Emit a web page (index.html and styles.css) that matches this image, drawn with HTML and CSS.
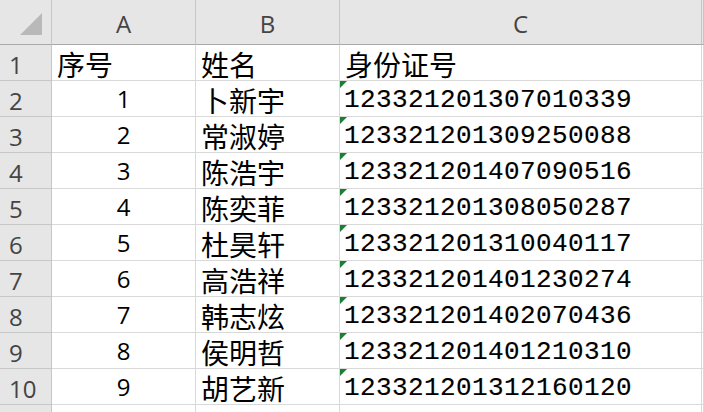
FILE: index.html
```html
<!DOCTYPE html>
<html lang="zh">
<head>
<meta charset="utf-8">
<link rel="stylesheet" href="styles.css">
</head>
<body>
<div class="sheet">
  <div class="hd corner"><span class="tri"></span></div>
  <div class="hd col">A</div>
  <div class="hd col">B</div>
  <div class="hd col">C</div>
  <div class="hd col"></div>

  <div class="hd row">1</div>
  <div class="cell zh">序号</div>
  <div class="cell zh">姓名</div>
  <div class="cell zh">身份证号</div>
  <div class="cell"></div>

  <div class="hd row">2</div>
  <div class="cell num">1</div>
  <div class="cell zh">卜新宇</div>
  <div class="cell id">123321201307010339</div>
  <div class="cell"></div>

  <div class="hd row">3</div>
  <div class="cell num">2</div>
  <div class="cell zh">常淑婷</div>
  <div class="cell id">123321201309250088</div>
  <div class="cell"></div>

  <div class="hd row">4</div>
  <div class="cell num">3</div>
  <div class="cell zh">陈浩宇</div>
  <div class="cell id">123321201407090516</div>
  <div class="cell"></div>

  <div class="hd row">5</div>
  <div class="cell num">4</div>
  <div class="cell zh">陈奕菲</div>
  <div class="cell id">123321201308050287</div>
  <div class="cell"></div>

  <div class="hd row">6</div>
  <div class="cell num">5</div>
  <div class="cell zh">杜昊轩</div>
  <div class="cell id">123321201310040117</div>
  <div class="cell"></div>

  <div class="hd row">7</div>
  <div class="cell num">6</div>
  <div class="cell zh">高浩祥</div>
  <div class="cell id">123321201401230274</div>
  <div class="cell"></div>

  <div class="hd row">8</div>
  <div class="cell num">7</div>
  <div class="cell zh">韩志炫</div>
  <div class="cell id">123321201402070436</div>
  <div class="cell"></div>

  <div class="hd row">9</div>
  <div class="cell num">8</div>
  <div class="cell zh">侯明哲</div>
  <div class="cell id">123321201401210310</div>
  <div class="cell"></div>

  <div class="hd row">10</div>
  <div class="cell num">9</div>
  <div class="cell zh">胡艺新</div>
  <div class="cell id">123321201312160120</div>
  <div class="cell"></div>

  <div class="hd row last"></div>
  <div class="cell last"></div>
  <div class="cell last"></div>
  <div class="cell last"></div>
  <div class="cell last"></div>
</div>
</body>
</html>
```
FILE: styles.css
```css
* { box-sizing: border-box; }
html, body { margin: 0; padding: 0; background: #fff; overflow: hidden; }
body { width: 704px; height: 412px; }

.sheet {
  display: grid;
  grid-template-columns: 52px 144px 144px 362px 1fr;
  grid-template-rows: 45px repeat(10, 36px) 7px;
  width: 704px;
  height: 412px;
}

.hd {
  background: #e6e6e6;
  color: #444;
  font-family: "Open Sans", "Liberation Sans", sans-serif;
  font-size: 24px;
  border-right: 1px solid #c6c6c6;
  border-bottom: 1px solid #c6c6c6;
  display: flex;
  align-items: center;
  justify-content: center;
}
.hd.col { border-bottom-color: #a8a8a8; padding-top: 2px; }
.hd.corner { position: relative; border-bottom-color: #a8a8a8; }
.hd.row { justify-content: flex-start; padding-left: 9px; padding-top: 4px; }
.hd.last, .cell.last { border-bottom: none; }

.tri {
  position: absolute;
  left: 20px;
  top: 13px;
  width: 0;
  height: 0;
  border-left: 22px solid transparent;
  border-bottom: 22px solid #b9b9b9;
}

.cell {
  position: relative;
  border-right: 1px solid #d9d9d9;
  border-bottom: 1px solid #d9d9d9;
  display: flex;
  align-items: flex-end;
  color: #000;
  white-space: nowrap;
}

.zh {
  font-family: "Noto Sans CJK SC", sans-serif;
  font-size: 28px;
  line-height: 32px;
  padding-left: 5px;
  padding-bottom: 0;
}

.num {
  justify-content: center;
  font-family: "Open Sans", "Noto Sans CJK SC", sans-serif;
  font-size: 24px;
  line-height: 30px;
  padding-bottom: 2px;
}

.id {
  font-family: "Liberation Mono", monospace;
  font-size: 26px;
  letter-spacing: 0.4px;
  line-height: 30px;
  padding-left: 4px;
  padding-bottom: 1px;
  -webkit-text-stroke: 0.15px #000;
}
.id::before {
  content: "";
  position: absolute;
  left: 0;
  top: 0;
  border-top: 7px solid #1a7f32;
  border-right: 7px solid transparent;
}
```
